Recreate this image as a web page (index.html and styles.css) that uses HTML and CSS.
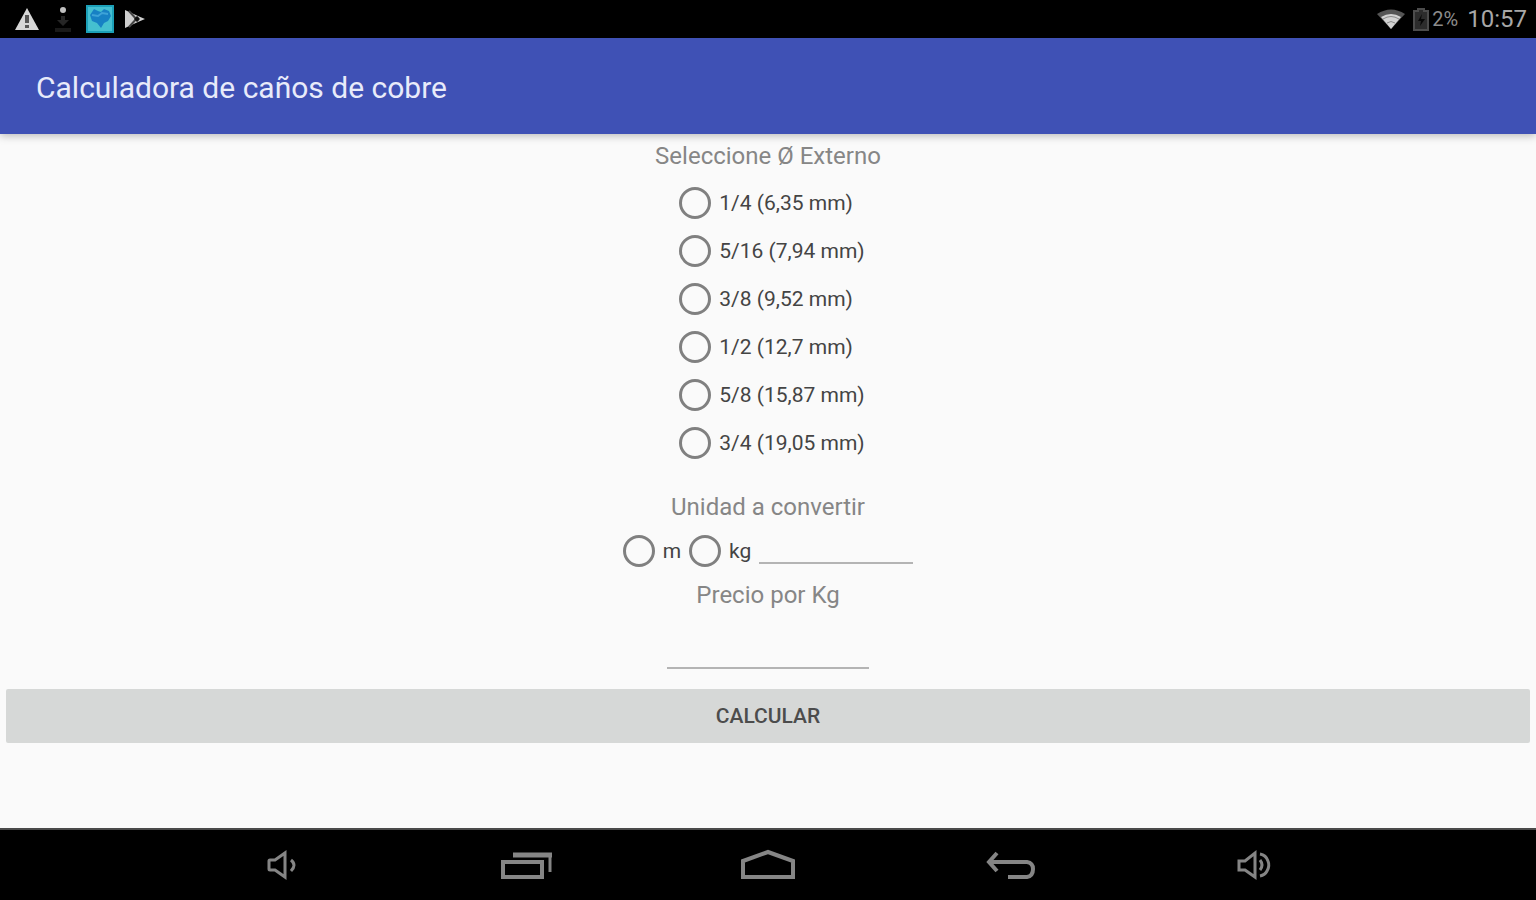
FILE: index.html
```
<!DOCTYPE html>
<html lang="es">
	<head>
		<title>Calculadora de caños de cobre</title>
		<meta charset="UTF-8">
		<meta name="viewport" content="width=device-width, initial-scale=1">
		<link rel="stylesheet" href="styles.css">
	</head>
	<body>
		<div class="status_bar">
			<div class="status_left">
				<svg class="icon_alert" width="26" height="24" viewBox="0 0 26 24">
					<path d="M13 1 L25 23 H1 Z" fill="#d6d6d6"/>
					<path d="M13 8 V16 M13 18 V21" stroke="#555" stroke-width="4"/>
				</svg>
				<svg class="icon_download" width="18" height="28" viewBox="0 0 18 28">
					<circle cx="9" cy="5" r="3" fill="#c0c0c0"/>
					<path d="M7 11 H11 V15 H15 L9 21 L3 15 H7 Z" fill="#262626"/>
					<path d="M1 25 H17" stroke="#1a1a1a" stroke-width="4"/>
				</svg>
				<svg class="icon_app" width="28" height="28" viewBox="0 0 28 28">
					<rect width="28" height="28" fill="#1ca0b8"/>
					<rect x="2" y="2" width="24" height="24" fill="#45bfd0"/>
					<path d="M8 4 L12 6 L15 7 L18 4 L23 6 L25 11 L22 16 L18 18 L15 23 L11 18 L6 16 L4 10 Z" fill="#1781c4"/>
					<path d="M6 10 L12 11 L16 8 L22 9" stroke="#3ea3d8" stroke-width="2" fill="none"/>
				</svg>
				<svg class="icon_play" width="22" height="20" viewBox="0 0 22 20">
					<path d="M1 1 L14 7 L21 10 L14 13 L1 19 Z" fill="#cfcfcf"/>
					<path d="M5 2 L14 12 M5 18 L14 8" stroke="#444" stroke-width="2"/>
					<path d="M10 10 L13 7 L16 10 L13 13 Z" fill="#111"/>
				</svg>
			</div>
			<div class="status_right">
				<svg width="28" height="20" viewBox="0 0 28 20">
					<path d="M0 5 Q14 -4 28 5 L14 20 Z" fill="#555"/>
					<path d="M4 8 Q14 2 24 8 L14 20 Z" fill="#d2d2d2"/>
					<path d="M6 10 Q14 5 22 10 M10 14 Q14 11 18 14" stroke="#8a8a8a" fill="none"/>
				</svg>
				<svg class="icon_battery" width="16" height="23" viewBox="0 0 16 23">
					<path d="M5 1 H11 V3 H15 V22 H1 V3 H5 Z" fill="#2c2c2c" stroke="#4c4c4c" stroke-width="2"/>
					<path d="M9 6 L5 13 H8 L7 18 L12 11 H8 Z" fill="#080808"/>
				</svg>
				<span class="battery">2%</span>
				<span class="clock">10:57</span>
			</div>
		</div>

		<header class="app_bar">
			<h1>Calculadora de caños de cobre</h1>
		</header>

		<main class="contenido">
			<h2 class="titulo" id="tituloDiametro">Seleccione Ø Externo</h2>
			<div class="diametros" role="radiogroup" aria-labelledby="tituloDiametro">
				<label class="opcion"><input type="radio" name="diametro" value="6.35">1/4 (6,35 mm)</label>
				<label class="opcion"><input type="radio" name="diametro" value="7.94">5/16 (7,94 mm)</label>
				<label class="opcion"><input type="radio" name="diametro" value="9.52">3/8 (9,52 mm)</label>
				<label class="opcion"><input type="radio" name="diametro" value="12.7">1/2 (12,7 mm)</label>
				<label class="opcion"><input type="radio" name="diametro" value="15.87">5/8 (15,87 mm)</label>
				<label class="opcion"><input type="radio" name="diametro" value="19.05">3/4 (19,05 mm)</label>
			</div>

			<label class="titulo" for="cantidad">Unidad a convertir</label>
			<div class="unidades">
				<label class="opcion"><input type="radio" name="unidad" value="m">m</label>
				<label class="opcion"><input type="radio" name="unidad" value="kg">kg</label>
				<input class="campo cantidad" id="cantidad" type="text" inputmode="decimal">
			</div>

			<label class="titulo" for="precio">Precio por Kg</label>
			<input class="campo precio" id="precio" type="text" inputmode="decimal">

			<button class="calcular" type="button">CALCULAR</button>
		</main>

		<nav class="nav_bar">
			<button type="button" aria-label="Bajar volumen">
				<svg width="32" height="32" viewBox="0 0 32 32">
					<path d="M3 12 Q3 11 4 11 H9 L19 4 V28 L9 21 H4 Q3 21 3 20 Z"/>
					<path d="M25 11 Q31 16 25 22"/>
				</svg>
			</button>
			<button type="button" aria-label="Aplicaciones recientes">
				<svg width="54" height="32" viewBox="0 0 54 32">
					<path d="M5 13 H44 V28 H5 Z" stroke-width="4"/>
					<path d="M15 6 H54" stroke-width="5"/>
					<path d="M52 4 V23"/>
				</svg>
			</button>
			<button type="button" aria-label="Inicio">
				<svg width="56" height="32" viewBox="0 0 56 32">
					<path d="M3 28 V12 L28 3 L53 12 V28 Z" stroke-width="4"/>
				</svg>
			</button>
			<button type="button" aria-label="Volver">
				<svg width="50" height="32" viewBox="0 0 50 32">
					<path d="M3 13 H41 Q47 14 47 20 Q47 27 41 28 H22" stroke-width="4"/>
					<path d="M11 4 L3 13 L11 22" stroke-width="4"/>
				</svg>
			</button>
			<button type="button" aria-label="Subir volumen">
				<svg width="36" height="32" viewBox="0 0 36 32">
					<path d="M3 12 H9 L19 4 V28 L9 21 H3 Z"/>
					<path d="M24 11 Q28 16 24 21"/>
					<path d="M24 5 Q30 6 32 12 Q34 17 31 22 Q29 26 24 27"/>
				</svg>
			</button>
		</nav>
	</body>
</html>
```
FILE: styles.css
```
* {
	box-sizing: border-box;
}

body {
	margin: 0;
	min-height: 100vh;
	display: flex;
	flex-direction: column;
	background-color: #fafafa;
	font-family: Roboto, sans-serif;
	color: #444;
}

.status_bar {
	display: flex;
	justify-content: space-between;
	align-items: center;
	height: 38px;
	padding: 0 9px 0 14px;
	background-color: #000;
}

.status_left,
.status_right {
	display: flex;
	align-items: center;
}

.status_left {
	gap: 14px;
}

.icon_play {
	margin-left: -4px;
}

.status_right {
	color: #a8a8a8;
	font-size: 24px;
	line-height: 38px;
}

.icon_battery {
	margin: 0 3px 0 8px;
}

.battery {
	margin-right: 9px;
	font-size: 20px;
	color: #8c8c8c;
}

.app_bar {
	display: flex;
	align-items: center;
	height: 96px;
	padding: 4px 36px 0;
	background-color: #3f51b5;
	box-shadow: 0 2px 8px rgba(0, 0, 0, 0.25);
}

.app_bar h1 {
	margin: 0;
	font-size: 30px;
	font-weight: 400;
	line-height: 40px;
	color: #e8ebfa;
}

.contenido {
	flex: 1;
	display: flex;
	flex-direction: column;
	align-items: center;
	padding: 6px;
}

.titulo {
	margin: 0;
	font-size: 24px;
	font-weight: 400;
	line-height: 32px;
	color: #868686;
}

.diametros {
	display: flex;
	flex-direction: column;
	margin: 7px 0 24px;
	padding-left: 8px;
}

.opcion {
	display: flex;
	align-items: center;
	gap: 8px;
	height: 48px;
	font-size: 21px;
}

.opcion input {
	appearance: none;
	width: 32px;
	height: 32px;
	margin: 0;
	border: 3px solid #808080;
	border-radius: 50%;
}

.opcion input:checked {
	background: radial-gradient(#3f51b5 50%, transparent 55%);
}

.unidades {
	display: flex;
	gap: 8px;
	margin: 4px 0;
}

.campo {
	padding: 0 4px;
	border: 0;
	border-bottom: 2px solid #b4b4b4;
	background: none;
	font: inherit;
	font-size: 24px;
	outline: none;
}

.cantidad {
	width: 154px;
	height: 37px;
}

.precio {
	width: 202px;
	height: 50px;
	margin: 8px 0 20px;
}

.calcular {
	align-self: stretch;
	height: 54px;
	border: 0;
	border-radius: 2px;
	background-color: #d6d8d7;
	font: inherit;
	font-size: 21px;
	font-weight: 500;
	color: #4c4c4c;
}

.nav_bar {
	display: grid;
	grid-template-columns: repeat(5, 1fr);
	height: 72px;
	padding: 0 160px;
	border-top: 2px solid #4a4a4a;
	background-color: #000;
}

.nav_bar button {
	display: flex;
	justify-content: center;
	align-items: center;
	padding: 0;
	border: 0;
	background: none;
}

.nav_bar svg {
	fill: none;
	stroke: #858585;
	stroke-width: 3;
}
```
